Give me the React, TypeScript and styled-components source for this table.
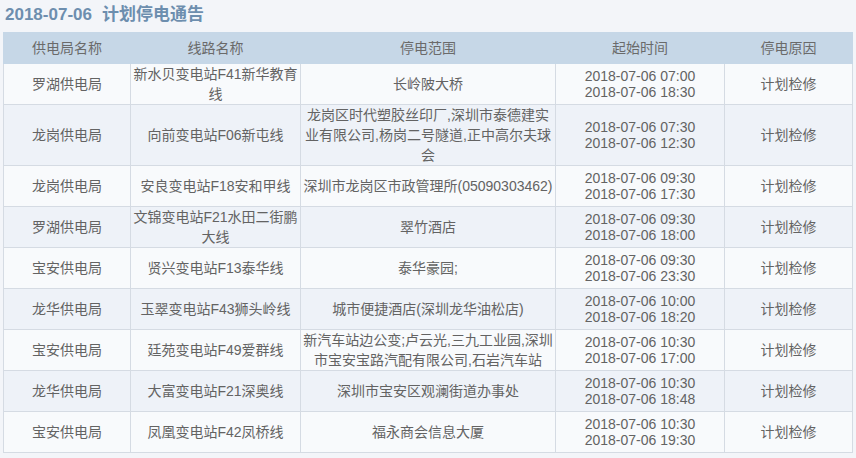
import React from "react";
import styled, { createGlobalStyle } from "styled-components";

const GlobalStyle = createGlobalStyle`
  html, body {
    margin: 0;
    padding: 0;
    background: #f3f5f9;
  }
  body {
    font-family: "Liberation Sans", "Noto Sans CJK SC", sans-serif;
    color: #636363;
  }
`;

const Page = styled.div`
  width: 856px;
  height: 458px;
  padding: 0 4px 0 3px;
  box-sizing: border-box;
  background: #f3f5f9;
  overflow: hidden;
`;

const Title = styled.h1`
  margin: 0;
  height: 32px;
  line-height: 30px;
  padding-left: 2px;
  font-size: 17px;
  font-weight: bold;
  color: #6d8eae;
  white-space: nowrap;
`;

const DateText = styled.span`
  margin-right: 10px;
`;

const Table = styled.table`
  width: 849px;
  table-layout: fixed;
  border-collapse: collapse;
  font-size: 14px;
`;

const HeadCell = styled.th`
  height: 30px;
  padding: 0;
  background: #c6d7e7;
  border: 1px solid #c6d7e7;
  font-weight: normal;
  color: #6a6a6a;
  text-align: center;
  vertical-align: middle;
  line-height: 20px;
`;

const Row = styled.tr<{ $alt: boolean }>`
  background: ${(p) => (p.$alt ? "#eef2f8" : "#f8fafc")};
`;

const Cell = styled.td<{ $mono?: boolean }>`
  height: 40px;
  padding: 0 2px;
  border: 1px solid #d5dbe3;
  text-align: center;
  vertical-align: middle;
  line-height: ${(p) => (p.$mono ? "16px" : "20px")};
  color: #636363;
  word-break: break-all;
`;

type Item = {
  bureau: string;
  line: string;
  range: string;
  start: string;
  end: string;
  reason: string;
};

const rows: Item[] = [
  { bureau: "罗湖供电局", line: "新水贝变电站F41新华教育线", range: "长岭陂大桥", start: "2018-07-06 07:00", end: "2018-07-06 18:30", reason: "计划检修" },
  { bureau: "龙岗供电局", line: "向前变电站F06新屯线", range: "龙岗区时代塑胶丝印厂,深圳市泰德建实业有限公司,杨岗二号隧道,正中高尔夫球会", start: "2018-07-06 07:30", end: "2018-07-06 12:30", reason: "计划检修" },
  { bureau: "龙岗供电局", line: "安良变电站F18安和甲线", range: "深圳市龙岗区市政管理所(05090303462)", start: "2018-07-06 09:30", end: "2018-07-06 17:30", reason: "计划检修" },
  { bureau: "罗湖供电局", line: "文锦变电站F21水田二街鹏大线", range: "翠竹酒店", start: "2018-07-06 09:30", end: "2018-07-06 18:00", reason: "计划检修" },
  { bureau: "宝安供电局", line: "贤兴变电站F13泰华线", range: "泰华豪园;", start: "2018-07-06 09:30", end: "2018-07-06 23:30", reason: "计划检修" },
  { bureau: "龙华供电局", line: "玉翠变电站F43狮头岭线", range: "城市便捷酒店(深圳龙华油松店)", start: "2018-07-06 10:00", end: "2018-07-06 18:20", reason: "计划检修" },
  { bureau: "宝安供电局", line: "廷苑变电站F49爱群线", range: "新汽车站边公变;卢云光,三九工业园,深圳市宝安宝路汽配有限公司,石岩汽车站", start: "2018-07-06 10:30", end: "2018-07-06 17:00", reason: "计划检修" },
  { bureau: "龙华供电局", line: "大富变电站F21深奥线", range: "深圳市宝安区观澜街道办事处", start: "2018-07-06 10:30", end: "2018-07-06 18:48", reason: "计划检修" },
  { bureau: "宝安供电局", line: "凤凰变电站F42凤桥线", range: "福永商会信息大厦", start: "2018-07-06 10:30", end: "2018-07-06 19:30", reason: "计划检修" },
];

const widths = [127, 170, 255, 169, 128];
const heads = ["供电局名称", "线路名称", "停电范围", "起始时间", "停电原因"];

export default function App() {
  return (
    <>
      <GlobalStyle />
      <Page>
        <Title>
          <DateText>2018-07-06</DateText>计划停电通告
        </Title>
        <Table>
          <colgroup>
            {widths.map((w, i) => (
              <col key={i} style={{ width: w }} />
            ))}
          </colgroup>
          <thead>
            <tr>
              {heads.map((h) => (
                <HeadCell key={h}>{h}</HeadCell>
              ))}
            </tr>
          </thead>
          <tbody>
            {rows.map((r, i) => (
              <Row key={i} $alt={i % 2 === 1}>
                <Cell>{r.bureau}</Cell>
                <Cell>{r.line}</Cell>
                <Cell>{r.range}</Cell>
                <Cell $mono>
                  {r.start}
                  <br />
                  {r.end}
                </Cell>
                <Cell>{r.reason}</Cell>
              </Row>
            ))}
          </tbody>
        </Table>
      </Page>
    </>
  );
}
